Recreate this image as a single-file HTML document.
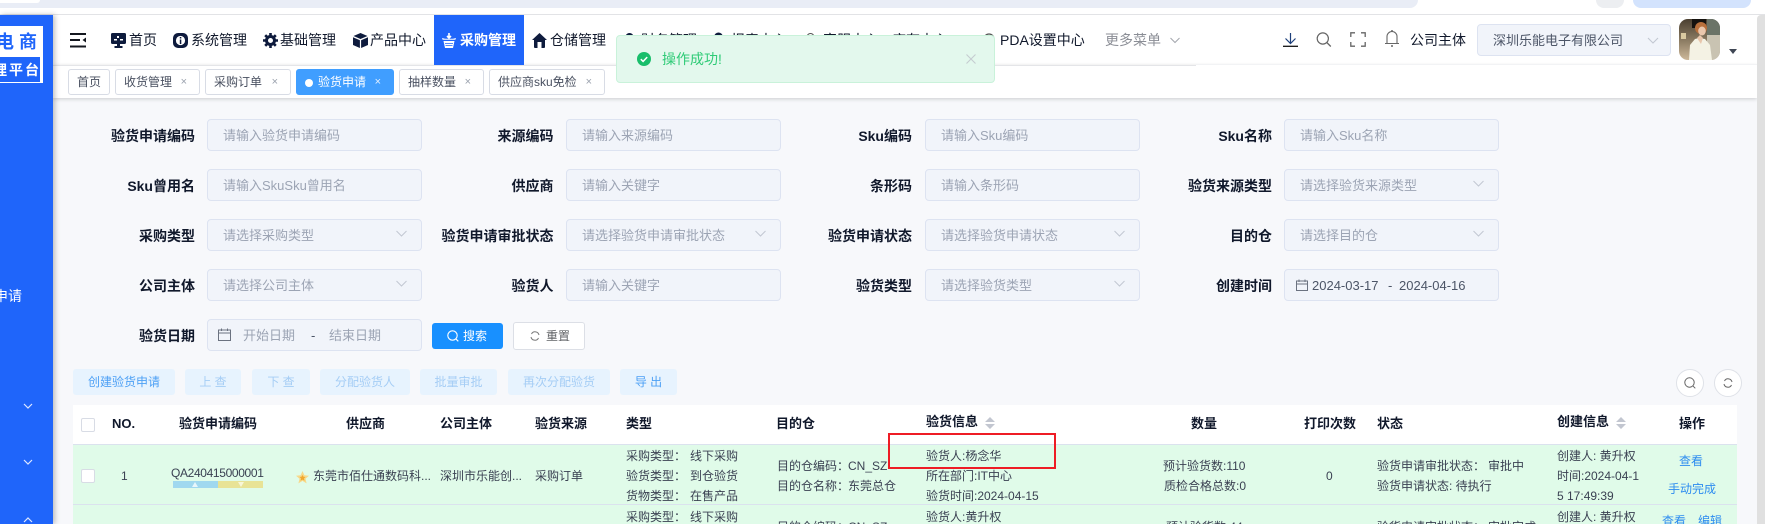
<!DOCTYPE html>
<html lang="zh"><head><meta charset="utf-8"><title>验货申请</title>
<style>
*{box-sizing:border-box}
html,body{margin:0;padding:0;width:1765px;height:524px;overflow:hidden;background:#fff}
body{position:relative;font-family:"Liberation Sans","Noto Sans CJK SC",sans-serif;font-size:12px;color:#2b3243}
.a{position:absolute}
.t{position:absolute;white-space:nowrap;line-height:20px;height:20px}
.n{font-size:14px;color:#10182b;top:30px}
.ic{position:absolute;overflow:visible}
.tab{position:absolute;top:69px;height:26px;border:1px solid #d8dce5;border-radius:3px;background:#fff;font-size:12px;line-height:24px;color:#495060;padding-left:8px;white-space:nowrap}
.tab i{position:absolute;right:12px;top:0;font-style:normal;font-size:11px;color:#9aa1ad}
.l{position:absolute;font-size:14px;font-weight:700;color:#10182b;line-height:20px;white-space:nowrap;text-align:right;width:130px}
.in{position:absolute;width:215px;height:32px;background:#f1f4fa;border:1px solid #dde3f1;border-radius:4px;font-size:13px;line-height:32px;color:#9ca4b4;padding-left:15px;white-space:nowrap}
.in svg{position:absolute;right:14px;top:10px}
.b{position:absolute;top:369px;height:26px;background:#e7f3fe;border-radius:3px;text-align:center;line-height:26px;font-size:12px;color:#a5cdf5}
.h{position:absolute;top:414px;font-size:13px;font-weight:700;color:#10182b;line-height:20px;white-space:nowrap}
.c{position:absolute;font-size:12px;line-height:20px;color:#3a4152;white-space:nowrap}
.cb{position:absolute;left:81px;width:14px;height:14px;background:#fff;border:1px solid #d8dce5;border-radius:2px}
.rl{position:absolute;left:73px;width:1664px;background:#e0fbe9}
</style></head><body>

<!-- browser strip -->
<div class="a" style="left:0;top:0;width:1418px;height:8px;background:#e9edf6;border-radius:0 0 12px 0"></div>
<div class="a" style="left:0;top:0;width:40px;height:3px;background:#fff;border-radius:0 0 6px 0"></div>
<div class="a" style="left:1596px;top:0;width:28px;height:8px;background:#eceef1;border-radius:0 0 12px 12px"></div>
<div class="a" style="left:1633px;top:0;width:118px;height:8px;background:#d3e3fd;border-radius:0 0 10px 10px"></div>
<div class="a" style="left:0;top:14px;width:1765px;height:1px;background:#e2e3e6"></div>

<!-- content bg -->
<div class="a" style="left:53px;top:98px;width:1712px;height:426px;background:#f7f8fb"></div>
<div class="a" style="left:53px;top:65px;width:1704px;height:33px;background:#fff;box-shadow:0 1px 4px rgba(0,0,0,.18)"></div>
<div class="a" style="left:53px;top:65px;width:1143px;height:1px;background:#e4e5e8"></div>
<div class="a" style="left:1196px;top:64px;width:561px;height:1px;background:#f2f3f5"></div>

<!-- sidebar -->
<div class="a" style="left:0;top:15px;width:53px;height:509px;background:#1f65fa;box-shadow:2px 0 5px rgba(0,0,0,.25);overflow:hidden">
  <div class="a" style="left:0;top:11px;width:43px;height:57px;background:#fff"></div>
  <div class="a" style="left:0;top:42px;width:40px;height:25px;background:#1f65fa"></div>
  <div class="t" style="left:-4px;top:16px;line-height:22px;height:22px;font-size:18px;font-weight:700;color:#1f65fa;letter-spacing:5px">电商</div>
  <div class="t" style="left:-7px;top:45px;font-size:14px;font-weight:700;color:#fff;letter-spacing:2px">理平台</div>
  <div class="t" style="left:-6px;top:271px;font-size:14px;color:#fff">申请</div>
  <svg class="ic" style="left:23px;top:388px" width="10" height="7" viewBox="0 0 10 7"><path d="M1 1l4 4 4-4" fill="none" stroke="#dfe8ff" stroke-width="1.2"/></svg>
  <svg class="ic" style="left:23px;top:444px" width="10" height="7" viewBox="0 0 10 7"><path d="M1 1l4 4 4-4" fill="none" stroke="#dfe8ff" stroke-width="1.2"/></svg>
  <svg class="ic" style="left:23px;top:501px" width="10" height="7" viewBox="0 0 10 7"><path d="M1 6l4-4 4 4" fill="none" stroke="#dfe8ff" stroke-width="1.2"/></svg>
</div>

<!-- top nav -->
<svg class="ic" style="left:70px;top:33px" width="16" height="15" viewBox="0 0 16 15"><path d="M0 1h16M0 7h10M0 13.500h16" stroke="#14171f" stroke-width="2" fill="none"/><path d="M16 4.500v5l-3.500-2.500z" fill="#14171f"/></svg>

<svg class="ic" style="left:111px;top:33px" width="15" height="15" viewBox="0 0 15 15"><path d="M1.500 0h12A1.500 1.500 0 0 1 15 1.500v8A1.500 1.500 0 0 1 13.500 11H9v2h2.500v2h-8v-2H6v-2H1.500A1.500 1.500 0 0 1 0 9.500v-8A1.500 1.500 0 0 1 1.500 0z" fill="#0e1b3d"/><path d="M6 3h2v2H6zM9 6h3v1.500H9zM3 6h3v1.500H3z" fill="#fff"/></svg>
<div class="t n" style="left:129px">首页</div>

<svg class="ic" style="left:173px;top:33px" width="15" height="15" viewBox="0 0 15 15"><path d="M5 0h5a5 5 0 0 1 5 5v5a5 5 0 0 1-5 5H5a5 5 0 0 1-5-5V5a5 5 0 0 1 5-5z" fill="#0e1b3d"/><circle cx="7.500" cy="7.500" r="4.600" fill="#fff"/><path d="M6.800 4h1.500v1.500H6.800zM6.800 6.500h1.500V11H6.800z" fill="#0e1b3d"/></svg>
<div class="t n" style="left:191px">系统管理</div>

<svg class="ic" style="left:263px;top:33px" width="15" height="15" viewBox="0 0 15 15"><circle cx="7.500" cy="7.500" r="4" fill="none" stroke="#0e1b3d" stroke-width="3"/><path d="M7.500 0v15M0 7.500h15M2.200 2.200l10.600 10.600M12.800 2.200L2.200 12.800" stroke="#0e1b3d" stroke-width="2.600" stroke-dasharray="3 9"/><circle cx="7.500" cy="7.500" r="1.700" fill="#fff"/></svg>
<div class="t n" style="left:280px">基础管理</div>

<svg class="ic" style="left:353px;top:33px" width="15" height="15" viewBox="0 0 15 15"><path d="M7.500 0L14.500 3 7.500 6 .5 3z" fill="#0e1b3d"/><path d="M0 4.200l6.900 3V15L0 12zM15 4.200l-6.900 3V15L15 12z" fill="#0e1b3d"/></svg>
<div class="t n" style="left:370px">产品中心</div>

<div class="a" style="left:434px;top:15px;width:90px;height:50px;background:#1f65fa"></div>
<svg class="ic" style="left:442px;top:33px" width="14" height="15" viewBox="0 0 14 15"><path d="M7 0v4.500M5 3l2 2 2-2" stroke="#fff" stroke-width="1.600" fill="none"/><path d="M0 5l3 .8h8L14 5l-.6 1.800H.6z" fill="#fff"/><path d="M1.500 8h11L11 15H3z" fill="#fff"/><path d="M3 10.500h8M3.500 12.500h7" stroke="#1f65fa" stroke-width=".8"/></svg>
<div class="t n" style="left:460px;color:#fff;font-weight:700">采购管理</div>

<svg class="ic" style="left:532px;top:33px" width="15" height="15" viewBox="0 0 15 15"><path d="M7.500 0L15 7h-2v7a1 1 0 0 1-1 1H3a1 1 0 0 1-1-1V7H0z" fill="#0e1b3d"/><path d="M5.500 9h4v6h-4z" fill="#fff"/></svg>
<div class="t n" style="left:550px">仓储管理</div>

<svg class="ic" style="left:625px;top:32px" width="9" height="10" viewBox="0 0 9 10"><circle cx="4.500" cy="5" r="4" fill="#0e1b3d"/></svg>
<div class="t n" style="left:641px">财务管理</div>
<svg class="ic" style="left:712px;top:32px" width="13" height="10" viewBox="0 0 13 10"><circle cx="6.500" cy="5" r="4.500" fill="#0e1b3d"/></svg>
<div class="t n" style="left:731px">报表中心</div>
<svg class="ic" style="left:806px;top:32px" width="9" height="10" viewBox="0 0 9 10"><circle cx="4.500" cy="5" r="3.500" fill="none" stroke="#555"/></svg>
<div class="t n" style="left:823px">客服中心</div>
<div class="t n" style="left:892px">库存中心</div>
<svg class="ic" style="left:983px;top:33px" width="12" height="12" viewBox="0 0 12 12"><circle cx="6" cy="6" r="5" fill="none" stroke="#555" stroke-width="1.200"/></svg>
<div class="t n" style="left:1000px">PDA设置中心</div>
<div class="t n" style="left:1105px;color:#8b8e96">更多菜单</div>
<svg class="ic" style="left:1170px;top:37px" width="10" height="7" viewBox="0 0 10 7"><path d="M.5 1L5 5.500 9.500 1" fill="none" stroke="#a3a6ad" stroke-width="1"/></svg>

<!-- right icons -->
<svg class="ic" style="left:1283px;top:32px" width="15" height="15" viewBox="0 0 15 15"><path d="M7.500 1v10M2.500 6.500l5 5 5-5" fill="none" stroke="#1d3f7a" stroke-width="1.200"/><path d="M0 14.300h15" stroke="#111" stroke-width="1.300"/></svg>
<svg class="ic" style="left:1316px;top:32px" width="16" height="15" viewBox="0 0 16 15"><circle cx="6.800" cy="6.500" r="5.600" fill="none" stroke="#666" stroke-width="1.200"/><path d="M10.800 10.500l4 4" stroke="#666" stroke-width="1.300"/></svg>
<svg class="ic" style="left:1350px;top:32px" width="16" height="15" viewBox="0 0 16 15"><path d="M.8 5V.8H5M11 .8h4.200V5M15.200 10v4.200H11M5 14.200H.8V10" fill="none" stroke="#666" stroke-width="1.300"/></svg>
<svg class="ic" style="left:1384px;top:30px" width="16" height="17" viewBox="0 0 16 17"><path d="M1 13.500h14M3 13.500V6.500a5 5 0 0 1 10 0v7" fill="none" stroke="#666" stroke-width="1.100"/><circle cx="8" cy="1" r="1" fill="#666"/><circle cx="8" cy="16" r="1" fill="#666"/></svg>
<div class="t n" style="left:1410px">公司主体</div>
<div class="in" style="left:1477px;top:24px;width:194px;color:#4c5567;padding-left:15px">深圳乐能电子有限公司<svg width="12" height="8" viewBox="0 0 12 8" style="right:11px;top:12px"><path d="M1 1l5 5 5-5" fill="none" stroke="#c2c7d2" stroke-width="1.100"/></svg></div>
<svg class="ic" style="left:1679px;top:19px" width="41" height="41" viewBox="0 0 41 41"><defs><clipPath id="av"><rect width="41" height="41" rx="9"/></clipPath><linearGradient id="avb" x1="0" y1="0" x2="0" y2="1"><stop offset="0" stop-color="#4a3f30"/><stop offset=".55" stop-color="#8f7f66"/><stop offset="1" stop-color="#cdb89a"/></linearGradient></defs><g clip-path="url(#av)"><rect width="41" height="41" fill="url(#avb)"/><rect x="13" width="14" height="9" fill="#15120f"/><rect x="28" width="13" height="16" fill="#6b7468"/><rect x="28" y="16" width="13" height="25" fill="#c9c3b2"/><rect x="2" y="14" width="5" height="6" fill="#d9c9a0"/><ellipse cx="22" cy="9" rx="6" ry="6" fill="#b9703c"/><ellipse cx="23" cy="12" rx="3.800" ry="4.500" fill="#eac7ad"/><path d="M10 41l1-15 5-6 4-1 6 1 5 6 2 15z" fill="#f4f2e4"/><path d="M18 19l3-3 3 3-2 6z" fill="#e8c6ac"/></g></svg>
<svg class="ic" style="left:1729px;top:49px" width="8" height="5" viewBox="0 0 8 5"><path d="M0 0h8L4 5z" fill="#3f4654"/></svg>

<!-- tabs -->
<div class="tab" style="left:68px;width:42px">首页</div>
<div class="tab" style="left:115px;width:85px">收货管理<i>×</i></div>
<div class="tab" style="left:205px;width:86px">采购订单<i>×</i></div>
<div class="tab" style="left:296px;width:98px;background:#409eff;border-color:#409eff;color:#fff;padding-left:21px"><span class="a" style="left:8px;top:9px;width:8px;height:8px;border-radius:50%;background:#fff"></span>验货申请<i style="color:#e4f0ff">×</i></div>
<div class="tab" style="left:399px;width:85px">抽样数量<i>×</i></div>
<div class="tab" style="left:489px;width:116px">供应商sku免检<i>×</i></div>

<!-- form labels -->
<div class="l" style="left:65px;top:126px">验货申请编码</div>
<div class="l" style="left:423.500px;top:126px">来源编码</div>
<div class="l" style="left:782px;top:126px">Sku编码</div>
<div class="l" style="left:1142px;top:126px">Sku名称</div>
<div class="l" style="left:65px;top:176px">Sku曾用名</div>
<div class="l" style="left:423.500px;top:176px">供应商</div>
<div class="l" style="left:782px;top:176px">条形码</div>
<div class="l" style="left:1142px;top:176px">验货来源类型</div>
<div class="l" style="left:65px;top:226px">采购类型</div>
<div class="l" style="left:423.500px;top:226px">验货申请审批状态</div>
<div class="l" style="left:782px;top:226px">验货申请状态</div>
<div class="l" style="left:1142px;top:226px">目的仓</div>
<div class="l" style="left:65px;top:276px">公司主体</div>
<div class="l" style="left:423.500px;top:276px">验货人</div>
<div class="l" style="left:782px;top:276px">验货类型</div>
<div class="l" style="left:1142px;top:276px">创建时间</div>
<div class="l" style="left:65px;top:326px">验货日期</div>

<div class="in" style="left:207px;top:119px">请输入验货申请编码</div>
<div class="in" style="left:566px;top:119px">请输入来源编码</div>
<div class="in" style="left:925px;top:119px">请输入Sku编码</div>
<div class="in" style="left:1284px;top:119px">请输入Sku名称</div>
<div class="in" style="left:207px;top:169px">请输入SkuSku曾用名</div>
<div class="in" style="left:566px;top:169px">请输入关键字</div>
<div class="in" style="left:925px;top:169px">请输入条形码</div>
<div class="in" style="left:1284px;top:169px">请选择验货来源类型<svg width="11" height="7" viewBox="0 0 11 7"><path d="M.5 1L5.500 6l5-5" fill="none" stroke="#c2c7d2"/></svg></div>
<div class="in" style="left:207px;top:219px">请选择采购类型<svg width="11" height="7" viewBox="0 0 11 7"><path d="M.5 1L5.500 6l5-5" fill="none" stroke="#c2c7d2"/></svg></div>
<div class="in" style="left:566px;top:219px">请选择验货申请审批状态<svg width="11" height="7" viewBox="0 0 11 7"><path d="M.5 1L5.500 6l5-5" fill="none" stroke="#c2c7d2"/></svg></div>
<div class="in" style="left:925px;top:219px">请选择验货申请状态<svg width="11" height="7" viewBox="0 0 11 7"><path d="M.5 1L5.500 6l5-5" fill="none" stroke="#c2c7d2"/></svg></div>
<div class="in" style="left:1284px;top:219px">请选择目的仓<svg width="11" height="7" viewBox="0 0 11 7"><path d="M.5 1L5.500 6l5-5" fill="none" stroke="#c2c7d2"/></svg></div>
<div class="in" style="left:207px;top:269px">请选择公司主体<svg width="11" height="7" viewBox="0 0 11 7"><path d="M.5 1L5.500 6l5-5" fill="none" stroke="#c2c7d2"/></svg></div>
<div class="in" style="left:566px;top:269px">请输入关键字</div>
<div class="in" style="left:925px;top:269px">请选择验货类型<svg width="11" height="7" viewBox="0 0 11 7"><path d="M.5 1L5.500 6l5-5" fill="none" stroke="#c2c7d2"/></svg></div>
<div class="in" style="left:1284px;top:269px">
  <svg width="12" height="12" viewBox="0 0 12 12" style="left:11px;right:auto;top:9px"><path d="M.5 2h11v9.500H.5zM.5 5h11M3 .5v2.500M9 .5v2.500" fill="none" stroke="#6b7280"/></svg>
  <span class="a" style="left:27px;top:0;color:#4c5567">2024-03-17</span><span class="a" style="left:103px;top:0;color:#4c5567">-</span><span class="a" style="left:114px;top:0;color:#4c5567">2024-04-16</span>
</div>
<div class="in" style="left:207px;top:319px">
  <svg width="13" height="13" viewBox="0 0 13 13" style="left:10px;right:auto;top:8px"><path d="M.5 2h12v10.500H.5zM.5 5h12M3.500 .5v2.500M9.500 .5v2.500" fill="none" stroke="#6b7280"/></svg>
  <span class="a" style="left:35px;top:0">开始日期</span><span class="a" style="left:103px;top:0;color:#4c5567">-</span><span class="a" style="left:121px;top:0">结束日期</span>
</div>
<div class="a" style="left:432px;top:323px;width:71px;height:26px;background:#1890ff;border-radius:3px;color:#fff;font-size:12px;line-height:26px;padding-left:31px">搜索
  <svg class="ic" style="left:15px;top:7px" width="12" height="12" viewBox="0 0 12 12"><circle cx="5.500" cy="5.500" r="4.700" fill="none" stroke="#fff" stroke-width="1.100"/><path d="M8.800 8.800l2.500 2.500" stroke="#fff" stroke-width="1.100"/></svg></div>
<div class="a" style="left:513px;top:322px;width:72px;height:28px;background:#fff;border:1px solid #dcdfe6;border-radius:3px;color:#606266;font-size:12px;line-height:26px;padding-left:32px">重置
  <svg class="ic" style="left:16px;top:8px" width="10" height="10" viewBox="0 0 10 10"><path d="M9 4A4 4 0 0 0 1.500 3M1 6a4 4 0 0 0 7.500 1" fill="none" stroke="#777"/></svg></div>

<!-- action buttons -->
<div class="b" style="left:73px;width:102px;color:#4da0f5">创建验货申请</div>
<div class="b" style="left:185px;width:56px">上 查</div>
<div class="b" style="left:252px;width:58px">下 查</div>
<div class="b" style="left:320px;width:90px">分配验货人</div>
<div class="b" style="left:420px;width:77px">批量审批</div>
<div class="b" style="left:508px;width:102px">再次分配验货</div>
<div class="b" style="left:620px;width:57px;color:#4da0f5">导 出</div>
<div class="a" style="left:1676px;top:369px;width:28px;height:28px;border-radius:50%;background:#fff;border:1px solid #dfe2e8"></div>
<svg class="ic" style="left:1684px;top:377px" width="12" height="12" viewBox="0 0 12 12"><circle cx="5.500" cy="5.500" r="4.700" fill="none" stroke="#666"/><path d="M8.800 8.800l2.500 2.500" stroke="#666"/></svg>
<div class="a" style="left:1714px;top:369px;width:28px;height:28px;border-radius:50%;background:#fff;border:1px solid #dfe2e8"></div>
<svg class="ic" style="left:1723px;top:378px" width="10" height="10" viewBox="0 0 10 10"><path d="M9 4A4 4 0 0 0 1.500 3M1 6a4 4 0 0 0 7.500 1" fill="none" stroke="#666"/></svg>

<!-- table -->
<div class="a" style="left:73px;top:405px;width:1664px;height:39px;background:#fff"></div>
<div class="rl" style="top:444px;height:61px;border-top:1px solid #dbe2ee;border-bottom:1px solid #dbe2ee"></div>
<div class="rl" style="top:505px;height:19px"></div>
<div class="cb" style="top:418px"></div>
<div class="h" style="left:112px">NO.</div>
<div class="h" style="left:179px">验货申请编码</div>
<div class="h" style="left:346px">供应商</div>
<div class="h" style="left:440px">公司主体</div>
<div class="h" style="left:535px">验货来源</div>
<div class="h" style="left:626px">类型</div>
<div class="h" style="left:776px">目的仓</div>
<div class="h" style="left:926px;top:412px">验货信息</div>
<svg class="ic" style="left:985px;top:417px" width="10" height="12" viewBox="0 0 10 12"><path d="M5 0l5 5H0zM5 12l5-5H0z" fill="#c2c6d0"/></svg>
<div class="h" style="left:1191px">数量</div>
<div class="h" style="left:1304px">打印次数</div>
<div class="h" style="left:1377px">状态</div>
<div class="h" style="left:1557px;top:412px">创建信息</div>
<svg class="ic" style="left:1616px;top:417px" width="10" height="12" viewBox="0 0 10 12"><path d="M5 0l5 5H0zM5 12l5-5H0z" fill="#c2c6d0"/></svg>
<div class="h" style="left:1679px">操作</div>

<!-- row 1 -->
<div class="cb" style="top:469px"></div>
<div class="c" style="left:121px;top:466px">1</div>
<div class="c" style="left:171px;top:463px;letter-spacing:-.35px">QA240415000001</div>
<div class="a" style="left:173px;top:481px;width:45px;height:7px;background:#a0d8ef"></div>
<div class="a" style="left:218px;top:481px;width:45px;height:7px;background:#e8e396"></div>
<svg class="ic" style="left:192px;top:482px" width="6" height="5" viewBox="0 0 6 5"><path d="M3 0l3 5H0z" fill="#e8f6fc"/></svg>
<svg class="ic" style="left:238px;top:482px" width="6" height="5" viewBox="0 0 6 5"><path d="M0 0h6L3 5z" fill="#f8f6d8"/></svg>
<svg class="ic" style="left:296px;top:471px" width="13" height="13" viewBox="0 0 13 13"><path d="M6.500 0l1.900 4.300 4.600.4-3.500 3 1.100 4.700-4.100-2.500-4.100 2.500 1.100-4.700-3.500-3 4.600-.4z" fill="#f7d98a"/><path d="M6.500 4l1 1.800 2 .2-1.500 1.400.5 2.400-2-1.200-2 1.200.5-2.400L3.500 6l2-.2z" fill="#f0a830"/></svg>
<div class="c" style="left:313px;top:466px">东莞市佰仕通数码科...</div>
<div class="c" style="left:440px;top:466px">深圳市乐能创...</div>
<div class="c" style="left:535px;top:466px">采购订单</div>
<div class="c" style="left:626px;top:446px">采购类型：</div><div class="c" style="left:690px;top:446px">线下采购</div>
<div class="c" style="left:626px;top:466px">验货类型：</div><div class="c" style="left:690px;top:466px">到仓验货</div>
<div class="c" style="left:626px;top:486px">货物类型：</div><div class="c" style="left:690px;top:486px">在售产品</div>
<div class="c" style="left:777px;top:456px">目的仓编码：</div><div class="c" style="left:848px;top:456px">CN_SZ</div>
<div class="c" style="left:777px;top:476px">目的仓名称：</div><div class="c" style="left:848px;top:476px">东莞总仓</div>
<div class="c" style="left:926px;top:446px">验货人:杨念华</div>
<div class="c" style="left:926px;top:466px">所在部门:IT中心</div>
<div class="c" style="left:926px;top:486px">验货时间:2024-04-15</div>
<div class="c" style="left:1163px;top:456px">预计验货数:110</div>
<div class="c" style="left:1164px;top:476px">质检合格总数:0</div>
<div class="c" style="left:1326px;top:466px">0</div>
<div class="c" style="left:1377px;top:456px">验货申请审批状态：</div><div class="c" style="left:1488px;top:456px">审批中</div>
<div class="c" style="left:1377px;top:476px">验货申请状态: 待执行</div>
<div class="c" style="left:1557px;top:446px">创建人: 黄升权</div>
<div class="c" style="left:1557px;top:466px">时间:2024-04-1</div>
<div class="c" style="left:1557px;top:486px">5 17:49:39</div>
<div class="c" style="left:1679px;top:451px;color:#2d8cf0">查看</div>
<div class="c" style="left:1668px;top:479px;color:#2d8cf0">手动完成</div>

<!-- row 2 -->
<div class="c" style="left:626px;top:507px">采购类型：</div><div class="c" style="left:690px;top:507px">线下采购</div>
<div class="c" style="left:777px;top:517px">目的仓编码：</div><div class="c" style="left:848px;top:517px">CN_SZ</div>
<div class="c" style="left:926px;top:507px">验货人:黄升权</div>
<div class="c" style="left:1166px;top:517px">预计验货数:44</div>
<div class="c" style="left:1377px;top:517px">验货申请审批状态：</div><div class="c" style="left:1488px;top:517px">审批完成</div>
<div class="c" style="left:1557px;top:507px">创建人: 黄升权</div>
<div class="c" style="left:1662px;top:511px;color:#2d8cf0">查看</div>
<div class="c" style="left:1698px;top:511px;color:#2d8cf0">编辑</div>

<!-- red annotation -->
<div class="a" style="left:888px;top:433px;width:168px;height:36px;border:2px solid #ee1c25"></div>

<!-- scrollbar -->
<div class="a" style="left:1757px;top:15px;width:8px;height:509px;background:#e0e0e0;border-radius:4px 0 0 0"></div>

<!-- toast -->
<div class="a" style="left:616px;top:35px;width:379px;height:48px;background:#e3f8ed;border:1px solid #c9f2da;border-radius:4px"></div>
<svg class="ic" style="left:637px;top:52px" width="14" height="14" viewBox="0 0 14 14"><circle cx="7" cy="7" r="7" fill="#19be6b"/><path d="M3.800 7.200l2.300 2.200 4.100-4.300" fill="none" stroke="#fff" stroke-width="1.500"/></svg>
<div class="t" style="left:662px;top:49px;font-size:14px;color:#2fcb77">操作成功!</div>
<svg class="ic" style="left:966px;top:54px" width="10" height="10" viewBox="0 0 10 10"><path d="M.5 .5l9 9M9.500 .5l-9 9" stroke="#c5cbd0" stroke-width="1.100"/></svg>
</body></html>
